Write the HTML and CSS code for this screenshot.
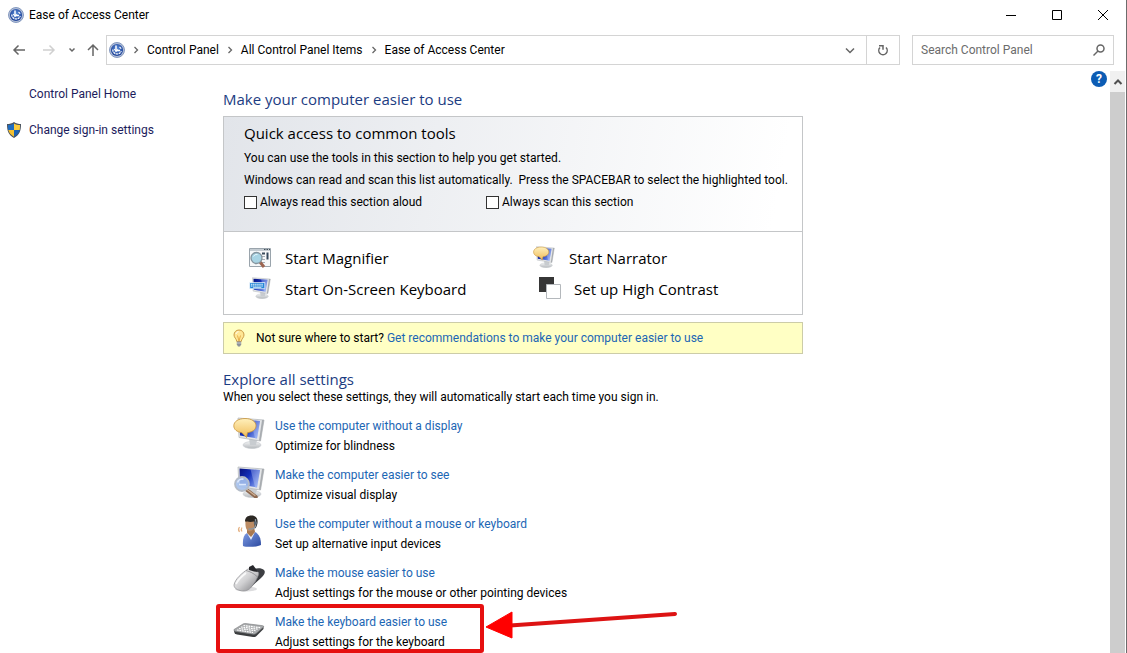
FILE: index.html
```
<!DOCTYPE html>
<html lang="en">
<head>
  <meta charset="UTF-8" />
  <meta name="viewport" content="width=device-width, initial-scale=1" />
  <title>Ease of Access Center</title>
  <link rel="stylesheet" href="styles.css">
</head>
<body>
  <!-- shared icon parts -->
  <svg class="defs" width="0" height="0" aria-hidden="true">
    <defs>
      <linearGradient id="screen" x1="0" y1="0" x2="1" y2="0.6">
        <stop offset="0" stop-color="#06107c" />
        <stop offset="0.5" stop-color="#1430b8" />
        <stop offset="1" stop-color="#7c98ec" />
      </linearGradient>
      <linearGradient id="stand" x1="0" y1="0" x2="0" y2="1">
        <stop offset="0" stop-color="#f4f5f6" />
        <stop offset="1" stop-color="#b4b8bc" />
      </linearGradient>
      <linearGradient id="bubble" x1="0" y1="0" x2="0" y2="1">
        <stop offset="0" stop-color="#fff0bc" />
        <stop offset="1" stop-color="#f0bc58" />
      </linearGradient>
      <linearGradient id="silver" x1="0" y1="0" x2="1" y2="1">
        <stop offset="0" stop-color="#ffffff" />
        <stop offset="0.5" stop-color="#d0d0d2" />
        <stop offset="1" stop-color="#78787c" />
      </linearGradient>
      <linearGradient id="shirt" x1="0" y1="0" x2="1" y2="1">
        <stop offset="0" stop-color="#7f9ce4" />
        <stop offset="1" stop-color="#2c4aa0" />
      </linearGradient>
      <radialGradient id="badge" cx="0.5" cy="0.4" r="0.6">
        <stop offset="0" stop-color="#5c8fdc" />
        <stop offset="1" stop-color="#1c3f94" />
      </radialGradient>
      <symbol id="monitor" viewBox="0 0 32 32">
        <ellipse cx="19" cy="28" rx="9" ry="3.5" fill="url(#stand)" stroke="#c4c8cc" stroke-width="0.6" />
        <path d="M16 21l8 2-1 5h-6z" fill="#c8ccd0" />
        <path d="M5 1l26 2-3.500 21L6 20.500z" fill="#e4e6e8" stroke="#b0b4b8" stroke-width="0.7" />
        <path d="M29 3l2 0-3.500 21-1.500-.5z" fill="#a8acb0" />
        <path d="M6.500 2.500l20.500 1.500-3 17.500-17-3z" fill="url(#screen)" />
        <path d="M17.500 3.300l9.500.7-3 17.500-2-.4z" fill="#dfe8ff" opacity="0.3" />
      </symbol>
      <symbol id="access" viewBox="0 0 16 16">
        <circle cx="8" cy="8" r="7.500" fill="#b4c0d8" stroke="#6f86b4" stroke-width="0.8" />
        <circle cx="8" cy="8" r="6.100" fill="url(#badge)" />
        <path d="M7 3.500v5h4" fill="none" stroke="#fff" stroke-width="1.500" />
        <path d="M3.800 7.500a4.300 4.300 0 0 0 8.400 1.500" fill="none" stroke="#fff" stroke-width="1.200" stroke-dasharray="2.200 0.600" />
        <path d="M5.300 7l1.700 2.500 2-2M10.500 5l1.700 1.700" fill="none" stroke="#fff" stroke-width="1.100" />
      </symbol>
      <symbol id="speech" viewBox="0 0 32 32">
        <use href="#monitor" />
        <path d="M12 1.500c6.500 0 11 3 11 7.300 0 3.700-3.500 6.200-8.500 6.900l-1 4.800-4.500-4.800C4 15 .8 12.500.8 8.800.8 4.500 5.500 1.500 12 1.500z" fill="url(#bubble)" stroke="#c99438" stroke-width="0.8" />
      </symbol>
    </defs>
  </svg>

  <div class="window">
    <header class="titlebar">
      <svg class="icon16" viewBox="0 0 16 16"><use href="#access" /></svg>
      <span class="title">Ease of Access Center</span>
      <div class="caption-buttons">
        <button aria-label="Minimize"><svg viewBox="0 0 12 12"><path d="M1 6.500h10" /></svg></button>
        <button aria-label="Maximize"><svg viewBox="0 0 12 12"><path d="M1.500 1.500h9v9h-9z" /></svg></button>
        <button aria-label="Close"><svg viewBox="0 0 12 12"><path d="M1 1l10 10M11 1L1 11" /></svg></button>
      </div>
    </header>

    <nav class="navbar">
      <div class="history">
        <button aria-label="Back"><svg viewBox="0 0 14 14"><path d="M13 7H2M6.500 2.500L2 7l4.500 4.500" /></svg></button>
        <button class="forward" aria-label="Forward" disabled><svg viewBox="0 0 14 14"><path d="M1 7h11M7.500 2.500L12 7l-4.500 4.500" /></svg></button>
        <button class="recent" aria-label="Recent locations"><svg viewBox="0 0 14 14"><path d="M4.500 5.500L7 8l2.500-2.500" /></svg></button>
        <button class="up" aria-label="Up"><svg viewBox="0 0 14 14"><path d="M7 13V2M2 7l5-5 5 5" /></svg></button>
      </div>
      <div class="address">
        <svg class="icon16" viewBox="0 0 16 16"><use href="#access" /></svg>
        <svg class="sep" viewBox="0 0 6 8"><path d="M1.500 1l3 3-3 3" /></svg>
        <a href="#">Control Panel</a>
        <svg class="sep" viewBox="0 0 6 8"><path d="M1.500 1l3 3-3 3" /></svg>
        <a href="#">All Control Panel Items</a>
        <svg class="sep" viewBox="0 0 6 8"><path d="M1.500 1l3 3-3 3" /></svg>
        <a href="#">Ease of Access Center</a>
        <button class="dropdown" aria-label="Previous locations"><svg viewBox="0 0 14 14"><path d="M3 5.500l4 4 4-4" /></svg></button>
        <button class="refresh" aria-label="Refresh"><svg viewBox="0 0 14 14"><path d="M10 4.500a4.200 4.200 0 1 1-6 0M3 2.800h4v4" /></svg></button>
      </div>
      <div class="search">
        <input type="text" placeholder="Search Control Panel" aria-label="Search Control Panel" />
        <svg viewBox="0 0 14 14"><circle cx="8.500" cy="5.500" r="3.500" /><path d="M6 8l-4.500 4.500" /></svg>
      </div>
    </nav>

    <div class="body">
      <aside class="sidebar">
        <a href="#">Control Panel Home</a>
        <a href="#" class="shielded">
          <svg viewBox="0 0 14 16">
            <path d="M7 0c2 1.500 4.500 2 7 2 0 7-1.500 11-7 14C1.500 13 0 9 0 2c2.500 0 5-.5 7-2z" fill="#49525e" />
            <path d="M7 1.500V8H1.300C1 6.500 1 5 1 3c2.200 0 4.200-.5 6-1.500z" fill="#1f6cc0" />
            <path d="M7 1.500V8h5.700C13 6.500 13 5 13 3c-2.200 0-4.200-.5-6-1.500z" fill="#fbcb3c" />
            <path d="M7 8v6.700C3.800 13 2 11 1.300 8z" fill="#f4c030" />
            <path d="M7 8v6.700C10.200 13 12 11 12.700 8z" fill="#1c62b4" />
          </svg>
          Change sign-in settings
        </a>
      </aside>

      <main class="content">
        <h1>Make your computer easier to use</h1>

        <section class="panel">
          <div class="quick">
            <h2>Quick access to common tools</h2>
            <p>You can use the tools in this section to help you get started.</p>
            <p>Windows can read and scan this list automatically.&nbsp; Press the SPACEBAR to select the highlighted tool.</p>
            <div class="checks">
              <label><input type="checkbox" /> Always read this section aloud</label>
              <label><input type="checkbox" /> Always scan this section</label>
            </div>
          </div>
          <div class="tools">
            <a href="#">
              <svg viewBox="0 0 22 22">
                <path d="M.5 1.500h21v18H.5z" fill="#f6f8f9" stroke="#9aa4ac" />
                <path d="M1 2h20v2H1z" fill="#c4ccd2" />
                <path d="M15 2.500h1.500M17.500 2.500h1.500M20 2.500h1" stroke="#44505a" />
                <path d="M13 9.500h3M13 12.500h3M13 15.500h3" stroke="#a4aeb6" />
                <path d="M13 6.500h3" stroke="#3a4c5c" stroke-width="2" />
                <path d="M18.500 5.500v7" stroke="#33485c" stroke-width="2" />
                <path d="M11 15l4 5" stroke="#9c6450" stroke-width="3" />
                <circle cx="7.500" cy="11" r="5.500" fill="#a8d4e4" stroke="#84949e" stroke-width="1.300" />
                <path d="M4.500 9.500a3.500 3.500 0 0 1 4-2" fill="none" stroke="#e4f6fc" />
              </svg>
              Start Magnifier
            </a>
            <a href="#">
              <svg class="raised" viewBox="0 0 32 32"><use href="#speech" /></svg>
              Start Narrator
            </a>
            <a href="#">
              <svg class="raised" viewBox="0 0 32 32">
                <use href="#monitor" />
                <path d="M1 8h22v9H1z" fill="#2486d8" stroke="#fff" />
                <path d="M3 10.500h18M3 13h18" stroke="#fff" stroke-width="1.500" stroke-dasharray="2 1" />
                <path d="M6 15.200h12" stroke="#fff" />
              </svg>
              Start On-Screen Keyboard
            </a>
            <a href="#" class="contrast">
              <svg class="raised" viewBox="0 0 22 22">
                <path d="M0 0h15v15H0z" fill="#363636" />
                <path d="M7.500 7.500h14v14h-14z" fill="#fff" stroke="#b4b8bc" />
              </svg>
              Set up High Contrast
            </a>
          </div>
        </section>

        <div class="tip">
          <svg viewBox="0 0 12 18">
            <path d="M6 1C3 1 1 3.200 1 6c0 2.500 2.500 3.800 2.800 6.500h4.400C8.500 9.800 11 8.500 11 6c0-2.800-2-5-5-5z" fill="#ffe694" stroke="#cc9c48" />
            <path d="M4.500 6.500L6 12l1.500-5.500" fill="none" stroke="#e0a038" stroke-width="0.8" />
            <path d="M3 5c.3-1.300 1.200-2.200 2.500-2.300" fill="none" stroke="#fff" />
            <path d="M3.800 12.500h4.400v3L7 17.500H5l-1.200-2z" fill="#8c9298" />
            <path d="M4 14h4" stroke="#d4d8dc" stroke-width="0.800" />
          </svg>
          <span>Not sure where to start? <a href="#">Get recommendations to make your computer easier to use</a></span>
        </div>

        <h1>Explore all settings</h1>
        <p class="lead">When you select these settings, they will automatically start each time you sign in.</p>

        <ul class="settings">
          <li>
            <svg viewBox="0 0 32 32"><use href="#speech" /></svg>
            <div>
              <a href="#">Use the computer without a display</a>
              <p>Optimize for blindness</p>
            </div>
          </li>
          <li>
            <svg viewBox="0 0 32 32">
              <use href="#monitor" />
              <path d="M14 24l9 7" stroke="#8c6850" stroke-width="3.500" stroke-linecap="round" />
              <path d="M14 23.500l8 6" stroke="#d0b094" stroke-width="1.200" stroke-linecap="round" />
              <circle cx="9" cy="18" r="7" fill="#a4c0ec" fill-opacity="0.9" stroke="#b4bcc8" stroke-width="1.800" />
              <path d="M4.500 16.500a5 5 0 0 1 6-3.200M6 18.500h7" fill="none" stroke="#dce8fc" stroke-width="1.500" />
            </svg>
            <div>
              <a href="#">Make the computer easier to see</a>
              <p>Optimize visual display</p>
            </div>
          </li>
          <li>
            <svg viewBox="0 0 32 32">
              <path d="M10 31c-.5-7 .5-11 4-13l8-1c4 2 6 6 6 13-4 2-14 2.500-18 1z" fill="url(#shirt)" />
              <path d="M14 18l4 7 4-8z" fill="#e8eefc" />
              <path d="M14 13l7-1 1 5-4 5-4-4z" fill="#a87850" />
              <path d="M12.500 6c0-3 3-4.500 6-4 4 .3 5.500 4 4 8-.8 4-3.500 6.500-6 6.300-3-.2-4.500-4-4-10.300z" fill="#bc8c64" />
              <path d="M12 6.500c0-4 2.500-6 6.500-6 4.500 0 6.500 3 6 7-.2 2.500-1 5-2.500 6l-1-7C17 7.500 14 6.500 12 6.500z" fill="#2c2824" />
              <path d="M22.500 4v7c-1 3-3.500 3.500-7 3" fill="none" stroke="#8c98a4" stroke-width="1.300" />
              <circle cx="22.500" cy="8" r="1.800" fill="#5c6874" />
              <path d="M9 12.500q-1.500 2 0 4M6.500 12q-2 2.500 0 5" fill="none" stroke="#e4b080" stroke-width="1.200" />
            </svg>
            <div>
              <a href="#">Use the computer without a mouse or keyboard</a>
              <p>Set up alternative input devices</p>
            </div>
          </li>
          <li>
            <svg viewBox="0 0 32 32">
              <ellipse cx="13" cy="25" rx="11" ry="2.500" fill="#dcdcde" />
              <path d="M20 5c5-1.500 9-1 11 1s0 5-3 8L17 24c4-6 6-11 3-19z" fill="#3c3e42" />
              <path d="M1 21c1-6 8-12 14-16 3-1 6 0 9 2 2 1.500 2 3 1 5-2 5-4 8-7.500 12-3 3-7 3.500-10.500 2.500-4-1-6-3-6-5.500z" fill="url(#silver)" stroke="#8c8c90" stroke-width="0.700" />
              <path d="M13 6.500c4 1 8 3 11 6" fill="none" stroke="#88888c" stroke-width="0.800" />
              <path d="M16 3l4-2 3 4 2 3-4-.5-5-1.500z" fill="#28282c" />
              <path d="M3 20c2-4 6-8 10-11" fill="none" stroke="#fff" stroke-width="1.800" opacity="0.8" />
            </svg>
            <div>
              <a href="#">Make the mouse easier to use</a>
              <p>Adjust settings for the mouse or other pointing devices</p>
            </div>
          </li>
          <li>
            <svg viewBox="0 0 32 32">
              <path d="M1 17c0 3 1 4 3 4.500l16 2.500c2 .2 2.500 0 3.500-1l7-7v-3z" fill="#3c3e40" />
              <path d="M1 16.500L10 11c1-.6 2-.6 3-.4l16 2c2 .3 2 1 1 2l-7 6c-1 .8-2 .8-3 .6L3 18.500c-1.500-.3-2.500-1-2-2z" fill="#a8aaac" stroke="#7c7e80" stroke-width="0.600" />
              <path d="M10.500 12.500l17 2.200M8 14l17 2.200M6 15.500l17 2.300M4 17l16 2.500" fill="none" stroke="#fff" stroke-width="1.200" stroke-dasharray="1.800 0.700" />
            </svg>
            <div>
              <a href="#">Make the keyboard easier to use</a>
              <p>Adjust settings for the keyboard</p>
            </div>
            <span class="highlight"></span>
            <svg class="arrow" viewBox="0 0 194 30">
              <path d="M25 15.500L190 4" stroke="#dd1313" stroke-width="4" stroke-linecap="round" />
              <path d="M1 17L27 2v26z" fill="#f00" stroke="#f00" stroke-linejoin="round" />
            </svg>
          </li>
        </ul>
      </main>

      <a href="#" class="help" aria-label="Help">?</a>
      <div class="scrollbar">
        <button aria-label="Scroll up"><svg viewBox="0 0 10 10"><path d="M1.500 7L5 3.500 8.500 7" /></svg></button>
        <div class="thumb"></div>
      </div>
    </div>
  </div>
</body>
</html>
```
FILE: styles.css
```
* {
  box-sizing: border-box;
}
body {
  margin: 0;
  font-family: Roboto, "Open Sans", sans-serif;
  font-size: 12px;
  color: #000;
  background-color: #fff;
}
h1, h2, p, ul {
  margin: 0;
  padding: 0;
  font-weight: normal;
}
a {
  color: #1c66b4;
  text-decoration: none;
}
button {
  display: flex;
  align-items: center;
  justify-content: center;
  padding: 0;
  border: none;
  background: none;
}
svg {
  display: block;
  flex: none;
}
.defs {
  position: absolute;
}
.icon16 {
  width: 16px;
  height: 16px;
}
.window {
  display: flex;
  flex-direction: column;
  height: 100vh;
  overflow: hidden;
  border-right: 1px solid #6c6c6c;
}

/* title bar */
.titlebar {
  display: flex;
  align-items: center;
  height: 29px;
  margin-bottom: 1px;
  padding-left: 8px;
}
.title {
  flex: 1;
  margin-left: 5px;
}
.caption-buttons {
  display: flex;
}
.caption-buttons button {
  width: 46px;
  height: 28px;
}
.caption-buttons svg {
  width: 12px;
  height: 12px;
  fill: none;
  stroke: #000;
}

/* navigation */
.navbar {
  display: flex;
  padding: 5px 12px 6px 12px;
}
.history {
  display: flex;
  align-items: center;
  width: 94px;
}
.history button {
  width: 14px;
  margin-right: 16px;
}
.history .forward {
  margin-right: 9px;
}
.history .recent {
  margin-right: 7px;
}
.history .up {
  margin-right: 0;
}
.navbar svg {
  fill: none;
}
.history svg,
.address button svg,
.search svg {
  width: 14px;
  height: 14px;
  stroke: #666;
  stroke-width: 1.5px;
}
.history button:disabled svg {
  stroke: #d0d0d0;
}
.address {
  display: flex;
  align-items: center;
  flex: 1;
  height: 30px;
  padding-left: 2px;
  border: 1px solid #d4d4d4;
}
.address a {
  color: #000;
}
.address .sep {
  width: 6px;
  height: 8px;
  margin: 0 8px;
  stroke: #666;
  stroke-width: 1.3px;
}
.address button {
  width: 33px;
  height: 28px;
}
.address .dropdown {
  margin-left: auto;
}
.address .refresh {
  border-left: 1px solid #d4d4d4;
}
.search {
  display: flex;
  align-items: center;
  width: 202px;
  height: 30px;
  margin-left: 12px;
  padding: 0 7px 0 8px;
  border: 1px solid #d4d4d4;
}
.search input {
  flex: 1;
  min-width: 0;
  padding: 0;
  border: none;
  outline: none;
  font: inherit;
}
.search input::placeholder {
  color: #6c6c6c;
}

/* page */
.body {
  display: flex;
  flex: 1;
  min-height: 0;
}
.sidebar {
  width: 223px;
  flex: none;
  padding: 13px 0 0 7px;
}
.sidebar a {
  display: flex;
  align-items: center;
  height: 20px;
  margin-bottom: 16px;
  padding-left: 22px;
  color: #1c1c5c;
}
.sidebar .shielded {
  gap: 8px;
  padding-left: 0;
}
.shielded svg {
  width: 14px;
  height: 16px;
}
.content {
  width: 580px;
  padding-top: 18px;
}
h1, h2, .tools a {
  font-family: "Open Sans", "Noto Sans", sans-serif;
  font-size: 15px;
}
h1 {
  line-height: 20px;
  color: #1c3c82;
}
.panel {
  margin-top: 7px;
  border: 1px solid #c4c6c8;
}
.quick {
  padding: 6px 0 18px 20px;
  border-bottom: 1px solid #c4c6c8;
  background: linear-gradient(100deg, #e2e5ea, #fff 95%);
}
h2 {
  margin-bottom: 4px;
  line-height: 20px;
}
.quick p {
  line-height: 22px;
  white-space: nowrap;
}
.checks {
  display: flex;
}
.checks label {
  display: flex;
  align-items: center;
  gap: 3px;
  width: 242px;
  height: 22px;
}
.checks input {
  appearance: none;
  width: 13px;
  height: 13px;
  margin: 0;
  border: 1px solid #333;
  background-color: #fff;
}
.tools {
  display: grid;
  grid-template-columns: 284px 1fr;
  padding: 10px 0 10px 25px;
}
.tools a {
  display: flex;
  align-items: center;
  gap: 14px;
  height: 31px;
  color: #000;
}
.tools svg {
  width: 22px;
  height: 22px;
}
.tools .raised {
  margin-bottom: 2px;
}
.tools .contrast {
  gap: 13px;
  padding-left: 6px;
}
.tip {
  display: flex;
  align-items: center;
  gap: 11px;
  height: 32px;
  margin: 7px 0 15px;
  padding-left: 9px;
  border: 1px solid #cccca8;
  background-color: #ffffc4;
  white-space: nowrap;
}
.tip svg {
  width: 12px;
  height: 18px;
}
.lead {
  line-height: 16px;
}

/* settings list */
.settings {
  margin-top: 11px;
  list-style: none;
}
.settings li {
  position: relative;
  display: flex;
  gap: 10px;
  margin-bottom: 9px;
  padding-left: 10px;
  line-height: 20px;
  white-space: nowrap;
}
.settings svg {
  width: 32px;
  height: 32px;
  margin-top: 1px;
}
.highlight {
  position: absolute;
  top: -8px;
  left: -7px;
  width: 268px;
  height: 49px;
  border: 4px solid #e61010;
  border-radius: 3px;
}
.settings .arrow {
  position: absolute;
  top: -3px;
  left: 262px;
  width: 194px;
  height: 30px;
}

/* right edge */
.help {
  width: 16px;
  height: 16px;
  margin-left: auto;
  border-radius: 50%;
  background-color: #0c5cb4;
  color: #fff;
  font-weight: bold;
  line-height: 16px;
  text-align: center;
}
.scrollbar {
  display: flex;
  flex-direction: column;
  width: 16px;
  margin-left: 3px;
  padding-right: 1px;
}
.scrollbar button {
  height: 21px;
  background-color: #f0f0f0;
}
.scrollbar svg {
  width: 10px;
  height: 10px;
  fill: none;
  stroke: #505050;
  stroke-width: 2px;
}
.thumb {
  flex: 1;
  background-color: #cdcdcd;
}
```
